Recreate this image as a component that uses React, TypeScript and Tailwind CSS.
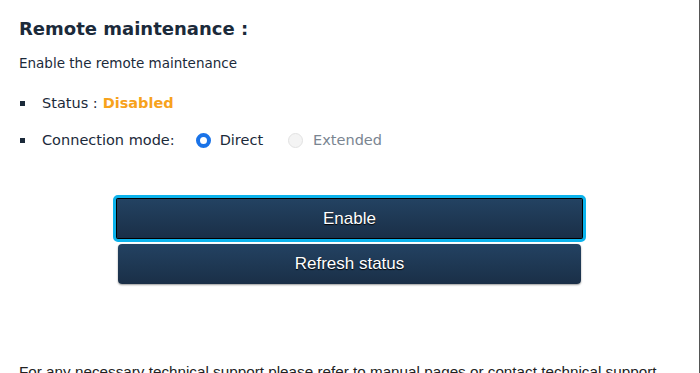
export default function App() {
  return (
    <div className="relative h-[373px] w-[700px] overflow-hidden bg-white border-r border-[#555]">
      <div className="px-[19px] pt-[16px] font-['DejaVu_Sans',sans-serif] text-[#1b2a3a]">
        <h1 className="text-[18px] font-bold leading-[26px]">Remote maintenance :</h1>
        <p className="mt-[12px] text-[13.5px] leading-[18px]">Enable the remote maintenance</p>
        <ul className="mt-[22px] space-y-[19px] text-[14.5px] leading-[18px]">
          <li className="flex items-center">
            <span className="ml-[1px] h-[5px] w-[5px] bg-[#1b2a3a]" />
            <span className="ml-[17px]">Status : </span>
            <span className="ml-[5px] font-bold text-[#f7a21c]">Disabled</span>
          </li>
          <li className="flex items-center">
            <span className="ml-[1px] h-[5px] w-[5px] bg-[#1b2a3a]" />
            <span className="ml-[17px]">Connection mode:</span>
            <span className="ml-[21px] flex items-center">
              <span className="h-[15px] w-[15px] rounded-full border-[4px] border-[#1a73e8] bg-white" />
              <span className="ml-[9px]">Direct</span>
            </span>
            <span className="ml-[25px] flex items-center text-[#7a8591]">
              <span className="h-[15px] w-[15px] rounded-full border border-[#e2e2e2] bg-[#f4f4f4]" />
              <span className="ml-[10px]">Extended</span>
            </span>
          </li>
        </ul>
      </div>

      <div className="mt-[46px] flex flex-col items-center font-['Liberation_Sans',Arial,sans-serif] text-[17px] text-white">
        <button className="flex h-[47px] w-[473px] items-center justify-center rounded-[5px] border-[3px] border-[#0cb3ec] bg-black p-[1px]">
          <span className="flex h-full w-full items-center justify-center bg-gradient-to-b from-[#234262] to-[#1a2f47] [text-shadow:0_1px_1px_#000]">
            Enable
          </span>
        </button>
        <button className="mt-[2px] flex h-[40px] w-[463px] items-center justify-center rounded-[4px] bg-gradient-to-b from-[#234262] to-[#1a2f47] shadow-[0_1px_2px_rgba(0,0,0,0.4)] [text-shadow:0_1px_1px_#000]">
          Refresh status
        </button>
      </div>

      <p className="mt-[79px] whitespace-nowrap px-[19px] font-['Liberation_Sans',Arial,sans-serif] text-[15.25px] leading-[18px] text-[#222]">
        For any necessary technical support please refer to manual pages or contact technical support
      </p>
    </div>
  );
}
